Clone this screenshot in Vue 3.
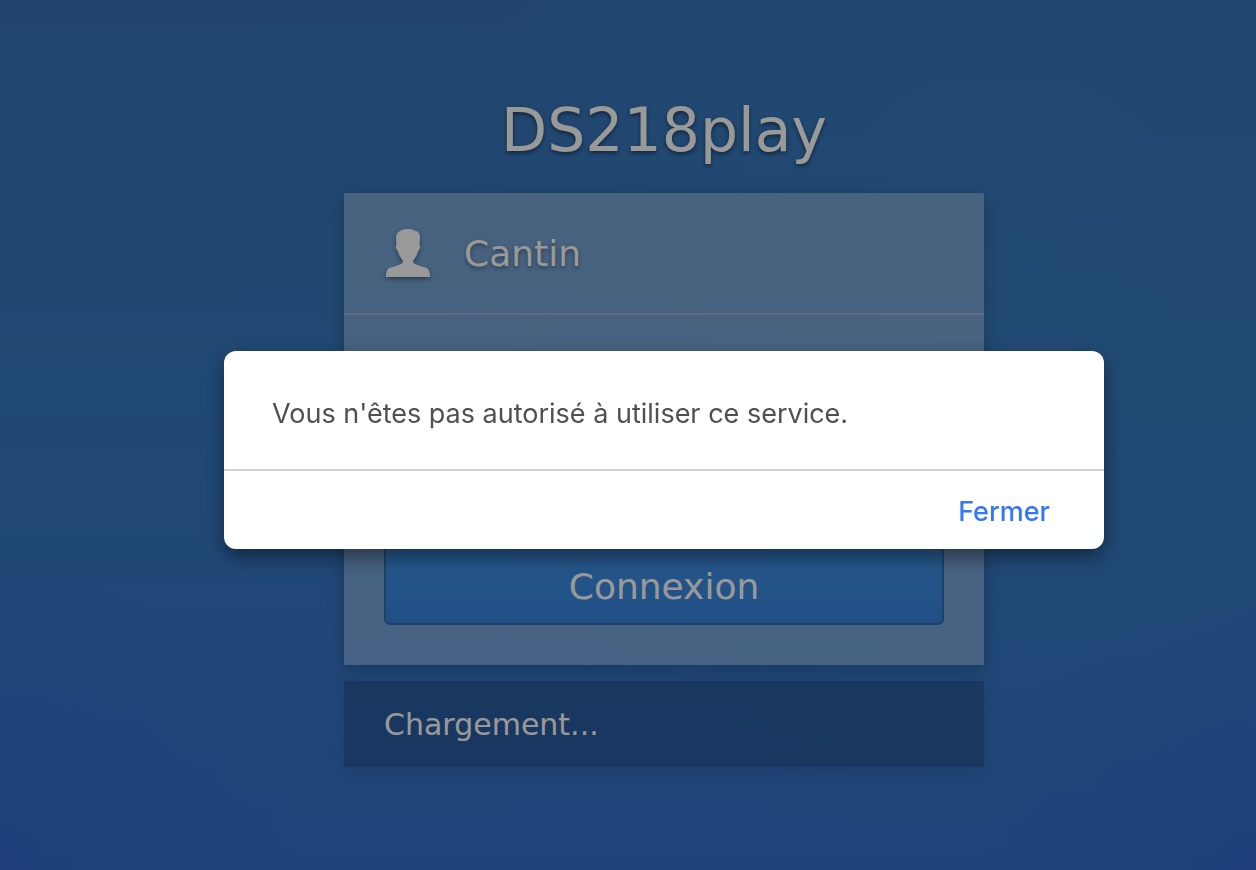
<script setup>
import { ref } from 'vue'

const device = 'DS218play'
const username = ref('Cantin')
const password = ref('')
const status = ref('Chargement...')
const dialogOpen = ref(true)
</script>

<template>
  <div class="page">
    <main class="login">
      <h1 class="title">{{ device }}</h1>
      <form class="card" @submit.prevent="dialogOpen = true">
        <div class="field">
          <svg class="icon" viewBox="0 -1 48 52" aria-hidden="true">
            <path
              d="M24 1c3 0 5 .5 6.500 1.500 3.500.5 5.400 2.800 5.500 6.500 0 2.500-.3 5-.5 7.500.7.5.8 1.500.5 3-.3 1.700-.8 2.800-1.900 3.500-.6 3-2 5.300-3.400 7.500-.8 1.200-1.500 1.500-1.500 2.800 0 1.500.5 2 2.300 3 2.700 1.500 6.500 1.900 10 3.300C45 41 46 43.500 46 49H2c0-5.500 1-8 4.500-9.400 3.500-1.400 7.300-1.800 10-3.300 1.800-1 2.300-1.500 2.300-3 0-1.300-.7-1.600-1.500-2.800-1.400-2.200-2.800-4.500-3.400-7.500-1.100-.7-1.600-1.800-1.900-3.500-.3-1.500-.2-2.500.5-3-.3-2.500-.6-5-.5-7.500C12.500 4 17 1 24 1z"
            />
          </svg>
          <input v-model="username" class="input" type="text" aria-label="Nom d'utilisateur" />
        </div>
        <div class="field">
          <svg class="icon" viewBox="0 0 48 52" aria-hidden="true">
            <path d="M8 24h4v-8a12 12 0 0 1 24 0v8h4v26H8zM17 24h14v-8a7 7 0 0 0-14 0z" />
          </svg>
          <input v-model="password" class="input" type="password" aria-label="Mot de passe" />
        </div>
        <div class="actions">
          <button class="submit" type="submit">Connexion</button>
        </div>
      </form>
      <p class="status">{{ status }}</p>
    </main>

    <div v-if="dialogOpen" class="overlay">
      <div class="dialog" role="alertdialog" aria-modal="true" aria-labelledby="dialog-message">
        <p id="dialog-message" class="message">Vous n'êtes pas autorisé à utiliser ce service.</p>
        <div class="footer">
          <button class="close" type="button" @click="dialogOpen = false">Fermer</button>
        </div>
      </div>
    </div>
  </div>
</template>

<style>
body {
  margin: 0;
}
</style>

<style scoped>
* {
  box-sizing: border-box;
}

.page {
  min-height: 100vh;
  padding: 88px 0 88px 72px;
  font-family: "DejaVu Sans", sans-serif;
  color: #fff;
  background:
    radial-gradient(circle at 80% 30%, rgba(57, 128, 194, 0.5), rgba(57, 128, 194, 0) 50%),
    radial-gradient(circle at 0% 100%, rgba(52, 104, 204, 0.6), rgba(52, 104, 204, 0) 20%),
    radial-gradient(circle at 100% 100%, rgba(52, 104, 204, 0.6), rgba(52, 104, 204, 0) 18%),
    linear-gradient(#3874b8, #377ac2 40%, #3677c9 75%, #3672cb);
}

.login {
  width: 100%;
  max-width: 640px;
  margin: 0 auto;
}

.title {
  margin: 0 0 21px;
  font-size: 60px;
  font-weight: 400;
  line-height: 84px;
  text-align: center;
  text-shadow: 0 2px 4px rgba(0, 0, 0, 0.5);
}

.card {
  background: rgba(255, 255, 255, 0.32);
  box-shadow: 0 4px 16px rgba(0, 0, 0, 0.25);
}

.field {
  display: flex;
  align-items: center;
  gap: 32px;
  height: 122px;
  padding: 0 40px;
  border-bottom: 2px solid rgba(255, 225, 225, 0.28);
}

.icon {
  flex: none;
  width: 48px;
  height: 52px;
  fill: #fff;
  fill-rule: evenodd;
  filter: drop-shadow(0 2px 2px rgba(0, 0, 0, 0.4));
}

.input {
  flex: 1;
  min-width: 0;
  height: 64px;
  padding: 0;
  border: 0;
  outline: 0;
  background: none;
  color: #fff;
  font: 36px "DejaVu Sans", sans-serif;
  text-shadow: 0 2px 4px rgba(0, 0, 0, 0.4);
}

.actions {
  padding: 108px 40px 40px;
}

.submit {
  display: block;
  width: 100%;
  height: 80px;
  padding: 2px 0 0;
  border: 2px solid #326fac;
  border-radius: 6px;
  background: linear-gradient(#4093e6, #3684de);
  color: #fff;
  font: 36px "DejaVu Sans", sans-serif;
}

.status {
  margin: 16px 0 0;
  padding: 23px 40px 21px;
  background: rgba(0, 0, 0, 0.2);
  box-shadow: 0 4px 16px rgba(0, 0, 0, 0.12);
  font-size: 30px;
  line-height: 42px;
}

.overlay {
  position: fixed;
  inset: 0;
  display: grid;
  place-items: center;
  padding: 30px 0 0 72px;
  background: rgba(0, 0, 0, 0.4);
}

.dialog {
  width: 100%;
  max-width: 880px;
  border-radius: 12px;
  background: #fff;
  box-shadow: 0 8px 20px rgba(0, 0, 0, 0.45);
  color: #505050;
  font-family: Inter, sans-serif;
}

.message {
  margin: 0;
  padding: 46px 48px 38px;
  font-size: 27px;
  line-height: 34px;
}

.footer {
  display: flex;
  justify-content: flex-end;
  padding: 19px 48px 17px;
  border-top: 2px solid #d2d2d2;
}

.close {
  height: 42px;
  padding: 0 6px;
  border: 0;
  background: none;
  color: #3478f6;
  font: 500 27px Inter, sans-serif;
  cursor: pointer;
}
</style>
